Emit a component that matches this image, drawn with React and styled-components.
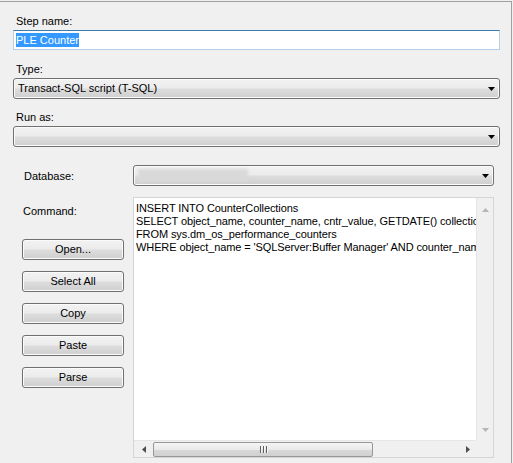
import styled, { createGlobalStyle } from "styled-components";

const GlobalStyle = createGlobalStyle`
  html, body {
    margin: 0;
    padding: 0;
    background: #f0f0f0;
  }
  body {
    font-family: "Liberation Sans", Arial, sans-serif;
    font-size: 11px;
    color: #000;
  }
`;

const Panel = styled.div`
  box-sizing: border-box;
  width: 512px;
  height: 462px;
  margin-top: 1px;
  border-top: 1px solid #a0a0a0;
  border-right: 1px solid #a0a0a0;
  background: #f0f0f0;
  padding: 12px 0 0 13px;
  overflow: hidden;
`;

const Field = styled.div`
  display: flex;
  flex-direction: column;
  width: 487px;
  margin-bottom: ${(p) => p.$after || 12}px;
`;

const Label = styled.label`
  display: block;
  line-height: 14px;
  padding-left: ${(p) => p.$indent || 3}px;
  margin-bottom: 2px;
  white-space: nowrap;
`;

const TextInput = styled.div`
  box-sizing: border-box;
  height: 20px;
  background: #fff;
  border: 1px solid #b5cfe7;
  border-top-color: #3d7bad;
  padding: 2px 0 0 2px;
  line-height: 14px;
`;

const Selection = styled.span`
  background: #3399ff;
  color: #fff;
  display: inline-block;
  line-height: 14px;
`;

const Combo = styled.div`
  box-sizing: border-box;
  position: relative;
  height: 21px;
  width: ${(p) => p.$width || "100%"};
  border: 1px solid #707070;
  border-radius: 3px;
  background: linear-gradient(#f2f2f2 0%, #ebebeb 48%, #dddddd 52%, #cfcfcf 100%);
  box-shadow: inset 0 0 0 1px #fbfbfb;
  padding: 0 0 0 4px;
  line-height: 19px;
  display: flex;
  align-items: center;
`;

const ComboArrow = styled.svg`
  position: absolute;
  right: 4px;
  top: 8px;
`;

const Blurred = styled.span`
  display: block;
  width: 110px;
  height: 13px;
  background: #d9d9d9;
  filter: blur(1.5px);
`;

const Lower = styled.div`
  display: grid;
  grid-template-columns: 133px 361px;
  margin-left: -13px;
  margin-top: 18px;
  row-gap: 11px;
`;

const SideLabel = styled.div`
  display: flex;
  align-items: ${(p) => (p.$top ? "flex-start" : "center")};
  padding-left: ${(p) => p.$indent}px;
  padding-top: ${(p) => (p.$top ? 7 : 0)}px;
  line-height: 14px;
`;

const CommandSide = styled.div`
  display: flex;
  flex-direction: column;
`;

const ButtonStack = styled.div`
  display: flex;
  flex-direction: column;
  gap: 11px;
  padding-left: 22px;
  margin-top: 21px;
`;

const Button = styled.div`
  box-sizing: border-box;
  width: 102px;
  height: 21px;
  border: 1px solid #707070;
  border-radius: 3px;
  background: linear-gradient(#f2f2f2 0%, #ebebeb 48%, #dddddd 52%, #cfcfcf 100%);
  box-shadow: inset 0 0 0 1px #fbfbfb;
  text-align: center;
  line-height: 19px;
`;

const Editor = styled.div`
  box-sizing: border-box;
  height: 261px;
  border: 1px solid #d5d5d5;
  background: #fff;
  display: grid;
  grid-template-columns: 1fr 17px;
  grid-template-rows: 1fr 17px;
`;

const Code = styled.pre`
  margin: 0;
  padding: 4px 0 0 2px;
  font-family: "Liberation Sans", Arial, sans-serif;
  font-size: 11px;
  letter-spacing: -0.1px;
  line-height: 13px;
  white-space: pre;
  overflow: hidden;
`;

const VScroll = styled.div`
  background: #f0f0f0;
  border-left: 1px solid #e6e6e6;
  display: flex;
  flex-direction: column;
  justify-content: space-between;
  align-items: center;
  padding: 10px 0 8px;
`;

const HScroll = styled.div`
  background: #f0f0f0;
  border-top: 1px solid #e6e6e6;
  display: flex;
  align-items: center;
  padding: 0 6px 0 0;
`;

const ArrowBox = styled.div`
  width: 19px;
  display: flex;
  justify-content: center;
  align-items: center;
`;

const Thumb = styled.div`
  box-sizing: border-box;
  width: 220px;
  height: 15px;
  border: 1px solid #979797;
  border-radius: 2px;
  background: linear-gradient(#f5f5f5 0%, #e9e9e9 50%, #d9d9d9 51%, #d0d0d0 100%);
  display: flex;
  align-items: center;
  justify-content: center;
  gap: 2px;
`;

const Grip = styled.span`
  width: 1px;
  height: 7px;
  background: #5f5f5f;
  box-shadow: 1px 0 0 #f5f5f5;
`;

const Spacer = styled.div`
  flex: 1;
`;

const Corner = styled.div`
  background: #f0f0f0;
`;

function DropArrow() {
  return (
    <ComboArrow width="7" height="4" viewBox="0 0 7 4">
      <polygon points="0,0 7,0 3.5,4" fill="#000" />
    </ComboArrow>
  );
}

function Tri({ dir, color }) {
  const pts = {
    up: "0,4 7,4 3.5,0",
    down: "0,0 7,0 3.5,4",
    left: "4,0 4,7 0,3.5",
    right: "0,0 0,7 4,3.5",
  }[dir];
  const vertical = dir === "up" || dir === "down";
  return (
    <svg width={vertical ? 7 : 4} height={vertical ? 4 : 7} viewBox={vertical ? "0 0 7 4" : "0 0 4 7"}>
      <polygon points={pts} fill={color} />
    </svg>
  );
}

const sql = `INSERT INTO CounterCollections
SELECT object_name, counter_name, cntr_value, GETDATE() collection_time
FROM sys.dm_os_performance_counters
WHERE object_name = 'SQLServer:Buffer Manager' AND counter_name = 'Page life expectancy'`;

export default function App() {
  return (
    <>
      <GlobalStyle />
      <Panel>
        <Field>
          <Label>Step name:</Label>
          <TextInput>
            <Selection>PLE Counter</Selection>
          </TextInput>
        </Field>
        <Field $after={11}>
          <Label>Type:</Label>
          <Combo>
            Transact-SQL script (T-SQL)
            <DropArrow />
          </Combo>
        </Field>
        <Field $after={0}>
          <Label>Run as:</Label>
          <Combo>
            <DropArrow />
          </Combo>
        </Field>

        <Lower>
          <SideLabel $indent={24}>Database:</SideLabel>
          <Combo $width="361px">
            <Blurred />
            <DropArrow />
          </Combo>

          <CommandSide>
            <SideLabel $indent={23} $top>
              Command:
            </SideLabel>
            <ButtonStack>
              <Button>Open...</Button>
              <Button>Select All</Button>
              <Button>Copy</Button>
              <Button>Paste</Button>
              <Button>Parse</Button>
            </ButtonStack>
          </CommandSide>
          <Editor>
            <Code>{sql}</Code>
            <VScroll>
              <Tri dir="up" color="#b5b5b5" />
              <Tri dir="down" color="#b5b5b5" />
            </VScroll>
            <HScroll>
              <ArrowBox>
                <Tri dir="left" color="#4d4d4d" />
              </ArrowBox>
              <Thumb>
                <Grip />
                <Grip />
                <Grip />
              </Thumb>
              <Spacer />
              <Tri dir="right" color="#4d4d4d" />
            </HScroll>
            <Corner />
          </Editor>
        </Lower>
      </Panel>
    </>
  );
}
